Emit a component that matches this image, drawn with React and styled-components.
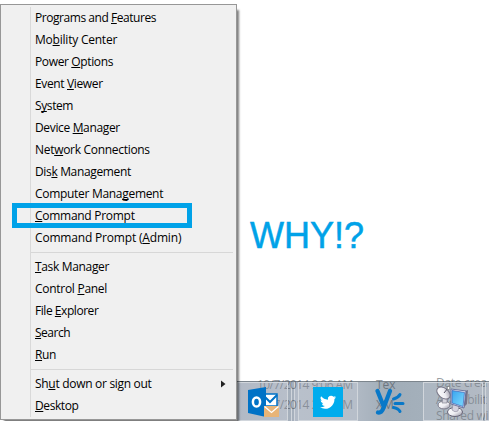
import React from "react";
import styled, { createGlobalStyle } from "styled-components";

const Global = createGlobalStyle`
  body { margin: 0; background: #fff; overflow: hidden; }
  * { box-sizing: border-box; }
`;

const Screen = styled.main`
  position: relative;
  display: flex;
  width: 489px;
  height: 421px;
  overflow: hidden;
  background: #fff;
  font-family: "Open Sans", "Noto Sans", sans-serif;
`;

const Menu = styled.nav`
  position: relative;
  z-index: 2;
  flex: none;
  width: 237px;
  height: 416px;
  margin-top: 4px;
  padding: 2px 2px 2px 0;
  border: 1px solid #979797;
  background: #f0f0f0;
  box-shadow: 3px 5px 2px -1px rgba(0, 0, 0, 0.5);
`;

const MenuBody = styled.div`
  height: 100%;
  margin-left: 29px;
  border-left: 1px solid #d9d9d9;
`;

const MenuRow = styled.div`
  display: flex;
  align-items: center;
  justify-content: space-between;
  height: 22px;
  padding: 0 8px 0 4px;
  color: #000;
  font-size: 12px;
  line-height: 22px;
  white-space: pre;
`;

const Label = styled.span`
  letter-spacing: ${(p) => p.$track}px;
`;

const Key = styled.span`
  text-decoration: underline;
  text-decoration-thickness: 1px;
  text-underline-offset: 1px;
  text-decoration-skip-ink: none;
`;

const Divider = styled.div`
  height: 7px;
  margin-right: 1px;
  padding-top: 3px;
  &::after { content: ""; display: block; height: 1px; background: #d7d7d7; }
`;

const Highlight = styled.div`
  position: absolute;
  z-index: 3;
  left: 12px;
  top: 203px;
  width: 180px;
  height: 25px;
  border: 5px solid #00a2e8;
`;

const Side = styled.section`
  display: flex;
  flex: 1;
  flex-direction: column;
  justify-content: space-between;
`;

const Question = styled.div`
  margin: 215px 0 0 13px;
  color: #00a2e8;
  font: 36px/42px "Liberation Sans", Arial, sans-serif;
  -webkit-text-stroke: 0.5px #00a2e8;
  white-space: nowrap;
`;

const Taskbar = styled.footer`
  position: relative;
  display: flex;
  flex: none;
  height: 40px;
  border-top: 1px solid #7c858d;
  background: linear-gradient(90deg, #aab3bf 0, #b3bbc7 60px, #b0b9c4 120px, #a1adb8 150px, #a4b0bb 190px, #adb5bf 252px);
`;

const TaskButton = styled.div`
  position: relative;
  display: flex;
  flex: none;
  align-items: center;
  justify-content: center;
  width: ${(p) => p.$width}px;
  height: 39px;
  margin-left: ${(p) => p.$gap || 0}px;
  border: ${(p) => (p.$plain ? "0" : "1px solid #d1d6dc")};
  background: ${(p) => (p.$plain ? "transparent" : "rgba(205,211,220,.22)")};
  svg { display: block; }
`;

const StackEdge = styled.div`
  flex: none;
  width: ${(p) => p.$width}px;
  border-right: 1px solid #d0d5dc;
  background: rgba(139, 151, 166, 0.3);
`;

const Ghost = styled.div`
  position: absolute;
  left: ${(p) => p.$x}px;
  top: ${(p) => p.$y}px;
  color: rgba(66, 72, 80, 0.55);
  font-size: 12px;
  line-height: 16px;
  letter-spacing: ${(p) => p.$track || 0}px;
  white-space: pre;
`;

const groups = [
  [
    ["Programs and ", "F", "eatures", -0.45],
    ["Mo", "b", "ility Center", -0.22],
    ["Power ", "O", "ptions", -0.37],
    ["Event ", "V", "iewer", -0.36],
    ["S", "y", "stem", -0.4],
    ["Device ", "M", "anager", -0.35],
    ["Net", "w", "ork Connections", -0.3],
    ["Dis", "k", " Management", -0.35],
    ["Computer Mana", "g", "ement", -0.3],
    ["", "C", "ommand Prompt", -0.28],
    ["Command Prompt (", "A", "dmin)", -0.18],
  ],
  [
    ["", "T", "ask Manager", -0.33],
    ["Control ", "P", "anel", -0.28],
    ["File ", "E", "xplorer", -0.45],
    ["", "S", "earch", -0.5],
    ["", "R", "un", -0.35],
  ],
  [
    ["Sh", "u", "t down or sign out", -0.3, true],
    ["", "D", "esktop", -0.4],
  ],
];

const Arrow = () => (
  <svg width="5" height="8" viewBox="0 0 5 8"><path d="M0 0.5 4.5 4 0 7.5Z" fill="#222" /></svg>
);

const Outlook = () => (
  <svg width="32" height="32" viewBox="0 0 32 32">
    <path d="M17 8h13v12H17z" fill="#fff" stroke="#0072c6" strokeWidth="1.5" />
    <path d="m18 11 5 5 7-7" fill="none" stroke="#0072c6" strokeWidth="2" />
    <path d="M1 4 19 1v30L1 27Z" fill="#0072c6" />
    <ellipse cx="9.5" cy="16" rx="3.6" ry="4.6" fill="none" stroke="#fff" strokeWidth="2.5" />
    <path d="M17 20h15v11H17z" fill="#e8b477" />
    <path d="m17.500 20.500 7 6 7-6" fill="none" stroke="#fff" strokeWidth="1.3" />
  </svg>
);

const Twitter = () => (
  <svg width="30" height="30" viewBox="0 0 30 30">
    <path fill="#00aced" d="M0 0h30v30H0z" />
    <path
      transform="translate(7 7.2) scale(.67)"
      fill="#fff"
      d="M23.95 4.57a10 10 0 0 1-2.82.77 4.96 4.96 0 0 0 2.16-2.72c-.95.55-2 .95-3.13 1.18a4.92 4.92 0 0 0-8.38 4.48C7.69 8.1 4.07 6.13 1.64 3.16a4.92 4.92 0 0 0 1.52 6.57 4.9 4.9 0 0 1-2.23-.61v.06a4.92 4.92 0 0 0 3.95 4.83 5 5 0 0 1-2.21.08 4.94 4.94 0 0 0 4.6 3.42A9.87 9.87 0 0 1 0 19.54a13.99 13.99 0 0 0 7.55 2.21c9.05 0 14-7.5 14-13.98 0-.21 0-.42-.02-.63a9.94 9.94 0 0 0 2.42-2.57z"
    />
  </svg>
);

const Yammer = () => (
  <svg width="32" height="32" viewBox="0 0 32 32" fill="none" stroke="#0878c8" strokeLinecap="round">
    <path d="M2.500 5 8.500 20M15 5 8.500 22c-1.500 4-3 5-5.500 4.500" strokeWidth="4.200" />
    <path d="M18.500 13q5-1.500 6.500-4.500M20 17.500h8M18.500 21.500q5 1 6.500 4" strokeWidth="3" />
  </svg>
);

const Satellite = () => (
  <svg width="34" height="32" viewBox="0 0 34 32">
    <defs>
      <linearGradient id="dish" x2="1" y2="1">
        <stop stopColor="#fff" /><stop offset=".55" stopColor="#eeeef3" /><stop offset="1" stopColor="#8d8b9b" />
      </linearGradient>
      <linearGradient id="screen" x2="1" y2="1">
        <stop stopColor="#38a4ee" /><stop offset="1" stopColor="#7fdcff" />
      </linearGradient>
    </defs>
    <ellipse cx="8" cy="19" rx="6" ry="4" fill="url(#dish)" stroke="#777687" />
    <path d="m6 17 1-6h4v6Z" fill="#d2d2db" stroke="#797987" strokeWidth=".6" />
    <ellipse cx="7.500" cy="7" rx="5" ry="7.500" transform="rotate(-52 7.500 7)" fill="url(#dish)" stroke="#777586" />
    <path d="m8 7 4-5" stroke="#555364" /><circle cx="12.500" cy="2" r="1.500" fill="#fff" stroke="#666" strokeWidth=".7" />
    <ellipse cx="19" cy="26" rx="7.500" ry="4.500" fill="url(#dish)" stroke="#656376" />
    <path d="m17 18 6 2-1 5q-3 2-6-1Z" fill="#d4d2df" stroke="#777589" strokeWidth=".5" />
    <path d="m29 5 3-1-1 14-4 4Z" fill="#77758a" />
    <path d="m15 3 15 2-2 17-13-4Z" fill="#e7e8f0" stroke="#555f8f" strokeWidth=".8" />
    <path d="m16 4.500 12.500 2-1.500 14-11-3.500Z" fill="url(#screen)" stroke="#3e60b5" strokeWidth=".7" />
  </svg>
);

export default function App() {
  return (
    <Screen>
      <Global />
      <Menu>
        <MenuBody>
          {groups.map((items, g) => (
            <React.Fragment key={g}>
              {g > 0 && <Divider />}
              {items.map(([before, key, after, track, submenu]) => (
                <MenuRow key={before + key + after}>
                  <Label $track={track}>{before}<Key>{key}</Key>{after}</Label>
                  {submenu && <Arrow />}
                </MenuRow>
              ))}
            </React.Fragment>
          ))}
        </MenuBody>
      </Menu>
      <Highlight />
      <Side>
        <Question>WHY!?</Question>
        <Taskbar>
          <Ghost $x={20} $y={-5} $track={-0.55}>10/7/2014 9:06 AM</Ghost>
          <Ghost $x={20} $y={15} $track={-0.55}>10/7/2014 2:13 PM</Ghost>
          <Ghost $x={139} $y={-5}>Tex</Ghost>
          <Ghost $x={139} $y={15}>XM</Ghost>
          <Ghost $x={199} $y={-7} $track={-0.3}>Date crea</Ghost>
          <Ghost $x={199} $y={10} $track={-0.3}>Availabilit</Ghost>
          <Ghost $x={199} $y={26} $track={-0.3}>Shared wi</Ghost>
          <TaskButton $width={51}><Outlook /></TaskButton>
          <StackEdge $width={4} />
          <StackEdge $width={3} />
          <TaskButton $width={60} $gap={3}><Twitter /></TaskButton>
          <TaskButton $width={65} $plain><Yammer /></TaskButton>
          <TaskButton $width={60}><Satellite /></TaskButton>
          <TaskButton $width={6} $gap={2} />
        </Taskbar>
      </Side>
    </Screen>
  );
}
